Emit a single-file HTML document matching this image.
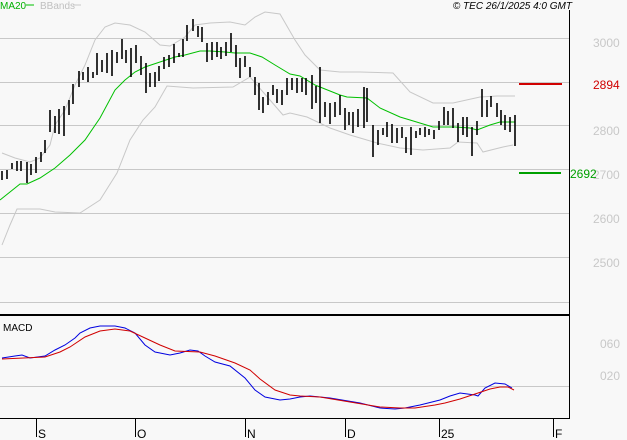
<!DOCTYPE html>
<html><head><meta charset="utf-8"><style>
html,body{margin:0;padding:0;background:#f8f8f8;}
svg{display:block;font-family:"Liberation Sans",sans-serif;}
</style></head><body>
<svg width="627" height="440" viewBox="0 0 627 440" xmlns="http://www.w3.org/2000/svg">
<rect width="627" height="440" fill="#f8f8f8"/>
<g stroke="#c8c8c8" stroke-width="1">
<line x1="0" y1="38.5" x2="569" y2="38.5"/>
<line x1="0" y1="82.5" x2="569" y2="82.5"/>
<line x1="0" y1="125.5" x2="569" y2="125.5"/>
<line x1="0" y1="169.5" x2="569" y2="169.5"/>
<line x1="0" y1="213.5" x2="569" y2="213.5"/>
<line x1="0" y1="257.5" x2="569" y2="257.5"/>
<line x1="0" y1="302.5" x2="569" y2="302.5"/>
<line x1="0" y1="386.5" x2="569" y2="386.5"/>
</g>
<line x1="0" y1="315" x2="569" y2="315" stroke="#000" stroke-width="2"/>
<line x1="569.5" y1="10" x2="569.5" y2="419" stroke="#000"/>
<line x1="0" y1="418.5" x2="570" y2="418.5" stroke="#000"/>
<g stroke="#000"><line x1="36.5" y1="418" x2="36.5" y2="437"/><line x1="135.5" y1="418" x2="135.5" y2="437"/><line x1="245.5" y1="418" x2="245.5" y2="437"/><line x1="345.5" y1="418" x2="345.5" y2="437"/><line x1="439.5" y1="418" x2="439.5" y2="437"/><line x1="553.5" y1="418" x2="553.5" y2="437"/></g>
<g font-size="12" fill="#000"><text x="38" y="438">S</text><text x="137" y="438">O</text><text x="247" y="438">N</text><text x="347" y="438">D</text><text x="441" y="438">25</text><text x="555" y="438">F</text></g>
<g fill="none" stroke="#c8c8c8" stroke-width="1">
<polyline points="2,153 15,158 30,162 40,158 50,145 55,125 65,110 75,85 85,65 95,40 105,27 115,23 130,25 145,32 160,45 170,46 185,37 195,25 210,23 230,22 245,25 255,17 265,12 280,14 295,40 305,55 320,70 340,72 360,72 393,73 410,92 433,103 453,103 480,97 497,96 515,96"/>
<polyline points="2,245 10,225 17,209 40,209 55,212 80,213 100,200 117,173 130,140 143,120 155,107 167,86 193,88 233,87 250,77 270,100 283,115 290,113 307,117 330,128 350,135 377,143 400,148 423,150 450,148 458,142 477,143 483,152 503,147 513,145"/>
</g>
<polyline fill="none" stroke="#00c000" stroke-width="1" points="0,200 20,184 27,184 40,178 55,168 70,155 85,140 100,118 115,90 125,80 135,72 145,67 160,62 175,57 185,55 200,51 210,51 225,52 235,53 250,53 262,57 275,65 290,74 300,76 315,85 340,95 347,97 367,98 380,108 400,117 410,120 433,127 455,127 470,128 477,130 490,125 500,122 515,122"/>
<path stroke="#000" stroke-width="1.6" fill="none" d="M2,171V180M7,170V179M12,163V169M17,161V171M21,161V171M27,162V183M31,164V175M36,157V173M41,152V162M45,140V153M50,110V132M55,116V133M59,109V134M64,106V136M69,100V115M73,84V104M79,71V87M83,72V80M88,67V82M93,72V78M97,53V75M102,60V72M107,53V73M112,50V76M117,52V63M122,39V59M126,50V63M131,48V77M136,45V63M141,56V75M146,63V93M150,73V87M155,72V87M159,66V81M164,57V69M169,55V67M174,44V63M179,53V57M183,39V57M187,25V41M193,19V31M198,26V37M202,27V42M207,43V62M212,42V60M217,42V57M221,47V59M226,42V56M231,33V52M236,45V67M240,58V78M245,56V67M250,67V77M255,77V95M259,83V110M263,97V113M268,92V105M273,85V95M277,89V103M282,90V105M287,78V95M292,78V90M297,78V93M302,78V92M306,78V95M312,75V109M316,86V103M320,67V123M325,102V117M330,103V124M335,102V117M340,95V115M345,108V130M349,112V125M353,112V133M358,109V127M364,87V128M367,88V122M373,125V157M378,130V145M383,128V135M387,122V137M392,124V143M397,128V143M402,127V138M406,137V153M411,127V155M416,131V138M420,128V135M425,127V137M429,129V135M434,130V139M439,121V130M444,107V125M448,111V125M453,108V128M458,123V142M463,117V135M467,117V137M472,127V156M477,121V135M482,89V117M487,100V117M491,96V107M497,103V117M501,110V125M505,115V130M510,117V132M515,115V146"/>
<line x1="519" y1="84" x2="562" y2="84" stroke="#d00000" stroke-width="2"/>
<line x1="519" y1="173" x2="561" y2="173" stroke="#00a000" stroke-width="2"/>
<g font-size="12" fill="#c8c8c8"><text x="593" y="47">3000</text><text x="593" y="135">2800</text><text x="593" y="179">2700</text><text x="593" y="223">2600</text><text x="593" y="267">2500</text><text x="600" y="348">060</text><text x="600" y="380">020</text></g>
<text x="593" y="89" font-size="12" fill="#d00000">2894</text>
<text x="570" y="178" font-size="12" fill="#00a000">2692</text>
<text x="0" y="9" font-size="10" fill="#00b000">MA20</text>
<line x1="26" y1="5" x2="34" y2="5" stroke="#00c000"/>
<text x="40" y="9" font-size="10" fill="#c0c0c0">BBands</text>
<line x1="73" y1="5" x2="81" y2="5" stroke="#c8c8c8"/>
<text x="572" y="9" font-size="10" font-style="italic" fill="#000" text-anchor="end">© TEC 26/1/2025 4:0 GMT</text>
<text x="3" y="331" font-size="10" fill="#000">MACD</text>
<polyline fill="none" stroke="#0000e0" stroke-width="1" points="2,358 15,356 22,355 30,358 45,356 55,350 65,345 75,338 80,333 90,328 100,326 115,326 125,328 135,333 145,345 155,352 170,355 180,353 190,350 198,351 205,356 215,362 230,366 245,378 255,390 265,397 280,400 290,399 300,397 310,396 330,398 360,403 380,408 395,409 405,408 420,405 440,400 450,396 460,393 475,395 478,396 485,388 495,383 505,384 512,388"/>
<polyline fill="none" stroke="#d00000" stroke-width="1" points="2,359 45,357 60,352 70,347 85,337 100,331 115,329 130,331 145,338 160,345 175,351 200,352 215,356 235,363 250,370 260,379 275,390 290,395 300,396 320,397 350,402 380,407 400,408 415,408 435,405 445,403 460,399 475,394 490,389 500,387 508,387 514,390"/>
</svg>
</body></html>
